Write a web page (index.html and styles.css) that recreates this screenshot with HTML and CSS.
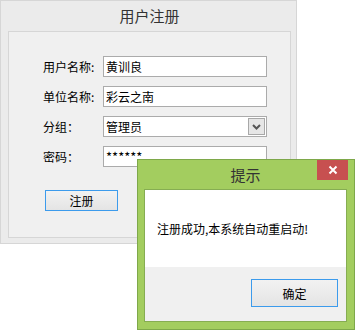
FILE: index.html
```html
<!DOCTYPE html>
<html>
<head>
	<meta charset="utf-8">
	<title>用户注册</title>
	<link rel="stylesheet" href="styles.css">
</head>
<body>
	<div class="window">
		<div class="window-title">用户注册</div>
		<div class="panel">
			<div class="form">
				<div class="row">
					<label class="label">用户名称:</label>
					<input class="field" type="text" value="黄训良">
				</div>
				<div class="row">
					<label class="label">单位名称:</label>
					<input class="field" type="text" value="彩云之南">
				</div>
				<div class="row">
					<label class="label">分组：</label>
					<div class="field select">
						<span>管理员</span>
						<span class="select-btn">
							<svg width="9" height="6" viewBox="0 0 9 6"><path d="M1 1 L4.5 4.5 L8 1" fill="none" stroke="#555" stroke-width="2"/></svg>
						</span>
					</div>
				</div>
				<div class="row">
					<label class="label">密码：</label>
					<input class="field password" type="text" value="******">
				</div>
				<button class="btn btn-register">注册</button>
			</div>
		</div>
	</div>

	<div class="dialog">
		<div class="dialog-title">提示</div>
		<div class="dialog-close">
			<svg width="10" height="10" viewBox="0 0 10 10"><path d="M1.5 1.5 L8.5 8.5 M8.5 1.5 L1.5 8.5" stroke="#fff" stroke-width="2"/></svg>
		</div>
		<div class="dialog-body">
			<div class="dialog-message">注册成功,本系统自动重启动!</div>
			<div class="dialog-footer">
				<button class="btn btn-ok">确定</button>
			</div>
		</div>
	</div>
</body>
</html>
```
FILE: styles.css
```css
* {
	box-sizing: border-box;
}

body {
	margin: 0;
	background-color: #fff;
	font-family: "Noto Sans CJK SC", "Microsoft YaHei", sans-serif;
	font-size: 12px;
	color: #000;
}

.window {
	width: 297px;
	height: 244px;
	background-color: #ebebeb;
	border: 1px solid #d6d6d6;
	padding: 0 5px 5px 7px;
	display: flex;
	flex-direction: column;
}

.window-title {
	height: 30px;
	line-height: 30px;
	text-align: center;
	font-size: 15px;
	color: #333;
}

.panel {
	flex: 1;
	background-color: #f0f0f0;
	border: 1px solid #d6d6d6;
}

.form {
	padding: 24px 0 0 34px;
	display: flex;
	flex-direction: column;
	align-items: flex-start;
}

.row {
	display: flex;
	align-items: center;
	height: 21px;
	margin-bottom: 9px;
}

.label {
	width: 60px;
	line-height: 21px;
}

.field {
	width: 164px;
	height: 21px;
	border: 1px solid #ababab;
	background-color: #fff;
	padding: 0 2px;
	font-family: inherit;
	font-size: 12px;
	color: #000;
	outline: none;
}

.password {
	font-size: 13px;
}

.select {
	display: flex;
	align-items: center;
	justify-content: space-between;
	padding: 0 1px 0 2px;
}

.select-btn {
	width: 17px;
	height: 17px;
	border: 1px solid #a8a8a8;
	background-color: #e6e6e6;
	display: flex;
	align-items: center;
	justify-content: center;
}

.btn {
	font-family: inherit;
	font-size: 12px;
	color: #000;
	border: 1px solid #3c9bec;
	background: linear-gradient(#f2f2f2, #e4e4e4);
	padding: 0;
}

.btn-register {
	margin: 14px 0 0 2px;
	width: 73px;
	height: 21px;
}

.dialog {
	position: absolute;
	left: 137px;
	top: 159px;
	width: 218px;
	height: 171px;
	background-color: #a3cd5f;
	border: 1px solid #7ea84a;
	padding: 0 7px 7px 6px;
	display: flex;
	flex-direction: column;
}

.dialog-title {
	height: 29px;
	line-height: 29px;
	text-align: center;
	font-size: 15px;
	color: #333;
}

.dialog-close {
	position: absolute;
	top: 0;
	right: 6px;
	width: 31px;
	height: 20px;
	background-color: #c75050;
	display: flex;
	align-items: center;
	justify-content: center;
}

.dialog-body {
	flex: 1;
	border: 1px solid #86ad52;
	background-color: #fff;
	display: flex;
	flex-direction: column;
}

.dialog-message {
	height: 77px;
	line-height: 77px;
	padding-left: 12px;
}

.dialog-footer {
	flex: 1;
	background-color: #f0f0f0;
	display: flex;
	justify-content: flex-end;
	align-items: flex-start;
	padding: 12px 8px 0 0;
}

.btn-ok {
	width: 87px;
	height: 28px;
}
```
